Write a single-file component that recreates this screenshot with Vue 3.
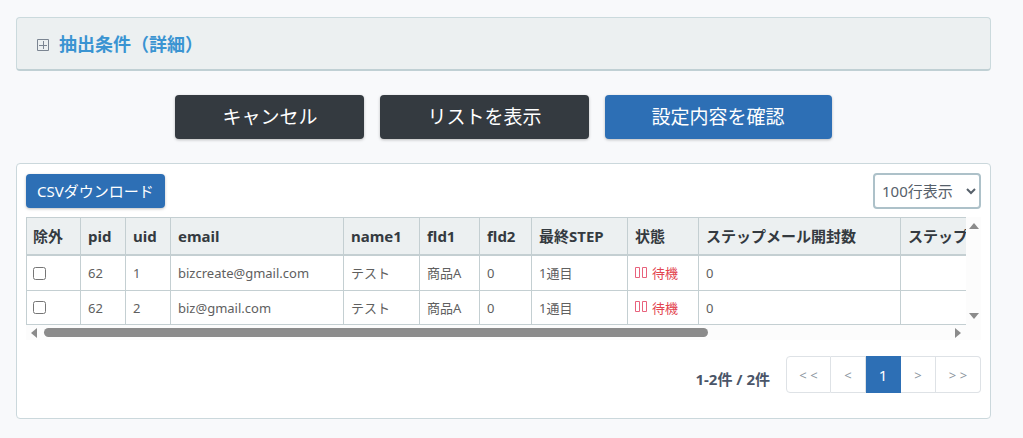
<template>
  <main class="page">
    <section class="filter-card">
      <button type="button" class="filter-toggle">
        <svg class="plus-icon" viewBox="0 0 12 12" aria-hidden="true">
          <path d="M.5 .5h11v11H.5zM2 6.5h8M6.5 2v8" />
        </svg>
        <span>抽出条件（詳細）</span>
      </button>
    </section>

    <div class="actions">
      <button type="button" class="btn btn-dark">キャンセル</button>
      <button type="button" class="btn btn-dark">リストを表示</button>
      <button type="button" class="btn btn-primary">設定内容を確認</button>
    </div>

    <section class="list-card">
      <div class="toolbar">
        <button type="button" class="btn btn-primary btn-csv">CSVダウンロード</button>
        <select v-model="perPage" class="per-page" aria-label="表示行数">
          <option :value="100">100行表示</option>
        </select>
      </div>

      <div class="scroll-frame">
        <div class="viewport">
          <table>
            <colgroup>
              <col class="w-check" />
              <col class="w-id" />
              <col class="w-id" />
              <col class="w-email" />
              <col class="w-name" />
              <col class="w-fld1" />
              <col class="w-fld2" />
              <col class="w-step" />
              <col class="w-status" />
              <col class="w-open" />
              <col class="w-rest" />
            </colgroup>
            <thead>
              <tr>
                <th v-for="(label, i) in columns" :key="i" scope="col">{{ label }}</th>
              </tr>
            </thead>
            <tbody>
              <tr v-for="row in rows" :key="row.uid">
                <td class="check">
                  <input v-model="row.excluded" type="checkbox" :aria-label="'除外 ' + row.email" />
                </td>
                <td>{{ row.pid }}</td>
                <td>{{ row.uid }}</td>
                <td>{{ row.email }}</td>
                <td>{{ row.name1 }}</td>
                <td>{{ row.fld1 }}</td>
                <td>{{ row.fld2 }}</td>
                <td>{{ row.step }}</td>
                <td>
                  <span class="status">
                    <svg class="pause-icon" viewBox="0 0 12 11" aria-hidden="true">
                      <path d="M.5 .5h4v10h-4zM7.5 .5h4v10h-4z" />
                    </svg>
                    {{ row.status }}
                  </span>
                </td>
                <td>{{ row.opened }}</td>
                <td></td>
              </tr>
            </tbody>
          </table>
        </div>
        <div class="bar-v" aria-hidden="true">
          <svg viewBox="0 0 10 6"><path d="M5 0l5 6H0z" /></svg>
          <svg viewBox="0 0 10 6"><path d="M0 0h10L5 6z" /></svg>
        </div>
        <div class="bar-h" aria-hidden="true">
          <svg viewBox="0 0 6 10"><path d="M6 0v10L0 5z" /></svg>
          <div class="track"><div class="thumb"></div></div>
          <svg viewBox="0 0 6 10"><path d="M0 0l6 5-6 5z" /></svg>
        </div>
      </div>

      <div class="footer">
        <span class="count">1-2件 / 2件</span>
        <nav class="pager" aria-label="ページ">
          <button
            v-for="item in pages"
            :key="item.label"
            type="button"
            :class="[item.size, { active: item.active }]"
          >{{ item.label }}</button>
        </nav>
      </div>
    </section>
  </main>
</template>

<script setup>
import { ref } from 'vue';

const perPage = ref(100);

const columns = [
  '除外', 'pid', 'uid', 'email', 'name1', 'fld1', 'fld2',
  '最終STEP', '状態', 'ステップメール開封数', 'ステップ'
];

const rows = ref([
  { pid: 62, uid: 1, email: 'bizcreate@gmail.com', name1: 'テスト', fld1: '商品A', fld2: 0, step: '1通目', status: '待機', opened: 0, excluded: false },
  { pid: 62, uid: 2, email: 'biz@gmail.com', name1: 'テスト', fld1: '商品A', fld2: 0, step: '1通目', status: '待機', opened: 0, excluded: false }
]);

const pages = [
  { label: '< <', size: 'wide' },
  { label: '<' },
  { label: '1', active: true },
  { label: '>' },
  { label: '> >', size: 'wide' }
];
</script>

<style>
body {
  background: #f8f9fb;
}
</style>

<style scoped>
.page {
  padding: 17px 32px 16px 16px;
  font-family: "Noto Sans", "Noto Sans CJK JP", sans-serif;
  color: #606060;
}

.page * {
  box-sizing: border-box;
}

button,
select {
  font-family: inherit;
  margin: 0;
  cursor: pointer;
}

.filter-card {
  background: #ecf0f1;
  border: 1px solid #cbdadd;
  border-bottom: 2px solid #c0d0d4;
  border-radius: 4px;
}

.filter-toggle {
  display: flex;
  align-items: center;
  gap: 10px;
  width: 100%;
  height: 51px;
  padding: 0 20px;
  border: 0;
  background: none;
  color: #3a94d2;
  font-size: 18px;
  font-weight: 700;
  line-height: 24px;
}

.plus-icon {
  width: 12px;
  height: 12px;
  margin-top: 2px;
  fill: none;
  stroke: #7b8592;
}

.actions {
  display: flex;
  justify-content: center;
  gap: 16px;
  margin: 24px 0;
}

.btn {
  height: 44px;
  padding: 0 47px;
  border: 0;
  border-radius: 4px;
  color: #fff;
  font-size: 19px;
  line-height: 24px;
  white-space: nowrap;
  box-shadow: 0 1px 3px rgba(0, 0, 0, 0.25);
}

.btn-dark {
  background: #343a40;
}

.btn-primary {
  background: #2d6fb5;
}

.list-card {
  padding: 9px 9px 25px;
  background: #fff;
  border: 1px solid #cbd8dc;
  border-radius: 4px;
}

.toolbar {
  display: flex;
  align-items: center;
  justify-content: space-between;
  margin-bottom: 8px;
}

.btn-csv {
  height: 34px;
  padding: 0 11px;
  font-size: 15px;
}

.per-page {
  width: 108px;
  height: 36px;
  padding: 0 0 0 3px;
  border: 2px solid #adc1c9;
  border-radius: 4px;
  background: #fff;
  color: #56606a;
  font-size: 15px;
}

.scroll-frame {
  display: grid;
  grid-template-columns: minmax(0, 1fr) 15px;
  grid-template-rows: auto 15px;
  background: #fcfcfc;
}

.viewport {
  overflow-x: auto;
  scrollbar-width: none;
  background: #fff;
}

table {
  width: 1261px;
  table-layout: fixed;
  border-collapse: separate;
  border-spacing: 0;
}

.w-check { width: 55px; }
.w-id { width: 45px; }
.w-email { width: 173px; }
.w-name { width: 76px; }
.w-fld1 { width: 60px; }
.w-fld2 { width: 52px; }
.w-step { width: 96px; }
.w-status { width: 71px; }
.w-open { width: 202px; }
.w-rest { width: 386px; }

th,
td {
  padding: 0 0 0 7px;
  border-right: 1px solid #c4cfd2;
  border-bottom: 1px solid #c4cfd2;
  text-align: left;
  white-space: nowrap;
}

th:first-child,
td:first-child {
  padding-left: 6px;
  border-left: 1px solid #c4cfd2;
}

th {
  height: 39px;
  border-top: 1px solid #c4cfd2;
  border-bottom-width: 2px;
  background: #ecf0f1;
  color: #343a40;
  font-size: 15px;
  line-height: 20px;
}

td {
  height: 35px;
  font-size: 13px;
  line-height: 20px;
}

tr:last-child td {
  height: 34px;
}

.check input {
  display: block;
  width: 13px;
  height: 13px;
  margin: 0;
}

.status {
  display: flex;
  align-items: center;
  gap: 5px;
  color: #e3454f;
}

.pause-icon {
  width: 12px;
  height: 11px;
  margin-bottom: 2px;
  fill: none;
  stroke: #e8627c;
}

.bar-v {
  display: flex;
  flex-direction: column;
  align-items: center;
  justify-content: space-between;
  padding: 6px 0;
}

.bar-v svg {
  width: 10px;
  height: 6px;
  fill: #8b8b8b;
}

.bar-h {
  display: flex;
  align-items: center;
  gap: 7px;
  padding: 0 5px;
}

.bar-h svg {
  width: 6px;
  height: 10px;
  fill: #8b8b8b;
}

.track {
  flex: 1;
}

.thumb {
  width: 74%;
  max-width: 664px;
  height: 9px;
  border-radius: 5px;
  background: #8b8b8b;
}

.footer {
  display: flex;
  align-items: center;
  justify-content: flex-end;
  gap: 16px;
  margin-top: 16px;
}

.count {
  padding-top: 8px;
  color: #4a5568;
  font-size: 15px;
  font-weight: 700;
  line-height: 20px;
}

.pager {
  display: flex;
}

.pager button {
  width: 35px;
  height: 37px;
  padding: 0;
  border: 1px solid #dee2e6;
  border-left-width: 0;
  background: #fff;
  color: #8b959e;
  font-size: 13px;
}

.pager .wide {
  width: 45px;
}

.pager button:first-child {
  border-left-width: 1px;
  border-radius: 4px 0 0 4px;
}

.pager button:last-child {
  border-radius: 0 4px 4px 0;
}

.pager button.active {
  border-color: #2d6fb5;
  background: #2d6fb5;
  color: #fff;
  font-size: 15px;
}
</style>
